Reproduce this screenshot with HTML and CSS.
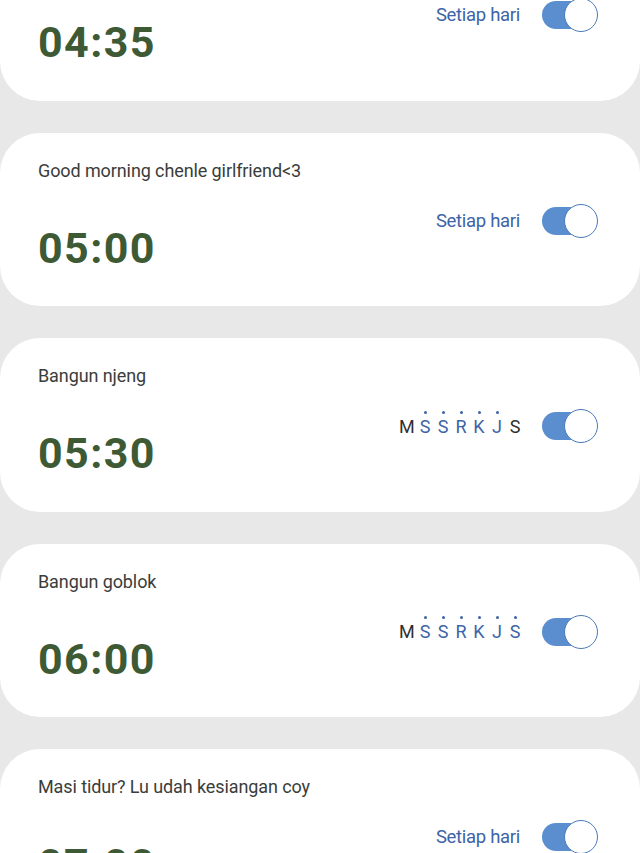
FILE: index.html
```html
<!DOCTYPE html>
<html lang="id">
<head>
<meta charset="utf-8">
<title>Alarm</title>
<link rel="stylesheet" href="styles.css">
</head>
<body>
<main class="list">
  <section class="card">
    <div class="label">Alarm pagi</div>
    <div class="row">
      <div class="time">04:35</div>
      <div class="right">
        <span class="repeat">Setiap hari</span>
        <span class="toggle"><span class="thumb"></span></span>
      </div>
    </div>
  </section>

  <section class="card">
    <div class="label">Good morning chenle girlfriend&lt;3</div>
    <div class="row">
      <div class="time">05:00</div>
      <div class="right">
        <span class="repeat">Setiap hari</span>
        <span class="toggle"><span class="thumb"></span></span>
      </div>
    </div>
  </section>

  <section class="card">
    <div class="label">Bangun njeng</div>
    <div class="row">
      <div class="time">05:30</div>
      <div class="right">
        <span class="days">
          <span class="day">M</span>
          <span class="day on">S</span>
          <span class="day on">S</span>
          <span class="day on">R</span>
          <span class="day on">K</span>
          <span class="day on">J</span>
          <span class="day">S</span>
        </span>
        <span class="toggle"><span class="thumb"></span></span>
      </div>
    </div>
  </section>

  <section class="card">
    <div class="label">Bangun goblok</div>
    <div class="row">
      <div class="time">06:00</div>
      <div class="right">
        <span class="days">
          <span class="day">M</span>
          <span class="day on">S</span>
          <span class="day on">S</span>
          <span class="day on">R</span>
          <span class="day on">K</span>
          <span class="day on">J</span>
          <span class="day on">S</span>
        </span>
        <span class="toggle"><span class="thumb"></span></span>
      </div>
    </div>
  </section>

  <section class="card">
    <div class="label">Masi tidur? Lu udah kesiangan coy</div>
    <div class="row">
      <div class="time">07:00</div>
      <div class="right">
        <span class="repeat">Setiap hari</span>
        <span class="toggle"><span class="thumb"></span></span>
      </div>
    </div>
  </section>
</main>
</body>
</html>
```

FILE: styles.css
```css
* { box-sizing: border-box; }
html, body {
  margin: 0;
  padding: 0;
  background: #e8e8e8;
  font-family: Roboto, "Noto Sans", "Liberation Sans", sans-serif;
  overflow: hidden;
}
.list {
  display: flex;
  flex-direction: column;
  gap: 32px;
  margin-top: -73px;
}
.card {
  background: #ffffff;
  border-radius: 40px;
  height: 173.5px;
  flex: none;
  padding: 28px 42px 0 38px;
  display: flex;
  flex-direction: column;
}
.label {
  font-size: 18px;
  line-height: 20px;
  color: #3a3d3a;
  letter-spacing: -0.1px;
}
.row {
  display: flex;
  justify-content: space-between;
  align-items: flex-start;
  margin-top: 22px;
}
.time {
  font-family: Roboto, "DejaVu Sans", sans-serif;
  font-weight: 700;
  font-size: 43px;
  line-height: 50px;
  color: #3e5a34;
  margin-top: 20px;
  letter-spacing: 1.4px;
}
.right {
  display: flex;
  align-items: center;
  gap: 22px;
  height: 34px;
  margin-top: 1px;
}
.repeat {
  font-size: 18.5px;
  color: #3d64a6;
  letter-spacing: -0.3px;
}
.days {
  display: flex;
  margin-right: -4px;
}
.day {
  position: relative;
  width: 18px;
  text-align: center;
  font-size: 18px;
  color: #2f2f2f;
}
.day:first-child { width: 17px; text-align: left; }
.day.on { color: #3d64a6; }
.day.on::before {
  content: "";
  position: absolute;
  top: -5px;
  left: 50%;
  width: 3px;
  height: 3px;
  margin-left: -1.5px;
  border-radius: 50%;
  background: #3d64a6;
}
.toggle {
  position: relative;
  display: block;
  width: 56px;
  height: 34px;
}
.toggle::before {
  content: "";
  position: absolute;
  left: 0;
  top: 3px;
  width: 46px;
  height: 28px;
  border-radius: 14px;
  background: #5a8ecf;
}
.thumb {
  position: absolute;
  right: 0;
  top: 0;
  width: 34px;
  height: 34px;
  border-radius: 50%;
  background: #ffffff;
  border: 1.5px solid #4b79b8;
}
```
